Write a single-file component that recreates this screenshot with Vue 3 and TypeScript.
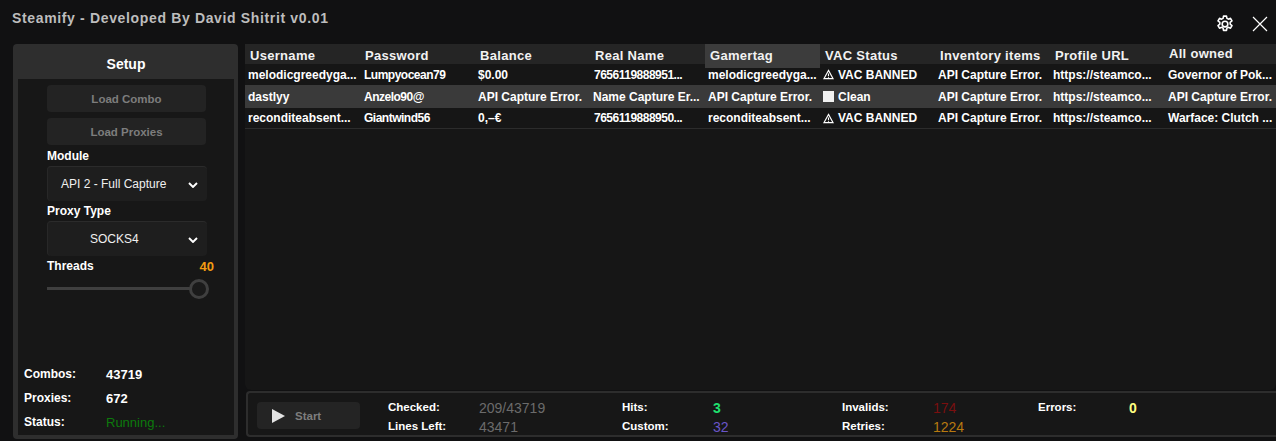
<script setup lang="ts">
interface Row { cells: string[]; vac: 'ban' | 'clean'; selected?: boolean }
const columns = ['Username', 'Password', 'Balance', 'Real Name', 'Gamertag', 'VAC Status', 'Inventory items', 'Profile URL', 'All owned']
const rows: Row[] = [
  { vac: 'ban', cells: ['melodicgreedyga...', 'Lumpyocean79', '$0.00', '7656119888951...', 'melodicgreedyga...', 'VAC BANNED', 'API Capture Error.', 'https://steamco...', 'Governor of Pok...'] },
  { vac: 'clean', selected: true, cells: ['dastlyy', 'Anzelo90@', 'API Capture Error.', 'Name Capture Er...', 'API Capture Error.', 'Clean', 'API Capture Error.', 'https://steamco...', 'API Capture Error.'] },
  { vac: 'ban', cells: ['reconditeabsent...', 'Giantwind56', '0,–€', '7656119888950...', 'reconditeabsent...', 'VAC BANNED', 'API Capture Error.', 'https://steamco...', 'Warface: Clutch ...'] },
]
const isTight = (cell: string, col: number) => col === 1 || /^\d{6}/.test(cell)
const statCols = [
  [{ l: 'Checked:', v: '209/43719', c: 'gray' }, { l: 'Lines Left:', v: '43471', c: 'gray' }],
  [{ l: 'Hits:', v: '3', c: 'green' }, { l: 'Custom:', v: '32', c: 'purple' }],
  [{ l: 'Invalids:', v: '174', c: 'red' }, { l: 'Retries:', v: '1224', c: 'amber' }],
  [{ l: 'Errors:', v: '0', c: 'yellow' }],
]
</script>

<template>
  <div class="win">
    <header class="top">
      <div class="title">Steamify - Developed By David Shitrit v0.01</div>
      <div class="win-icons">
        <svg class="gear" viewBox="0 0 24 24" width="20" height="20" fill="none" stroke="#fff" stroke-width="1.9" stroke-linejoin="round">
          <path d="M10.2 2.5h3.6l.5 2.8 1.7.9 2.6-1 1.8 3.1-2.2 1.8v2l2.2 1.8-1.8 3.1-2.6-1-1.7.9-.5 2.8h-3.6l-.5-2.8-1.7-.9-2.6 1-1.8-3.1 2.2-1.8v-2L3.6 8.3l1.8-3.1 2.6 1 1.7-.9z" />
          <circle cx="12" cy="12" r="3.4" />
        </svg>
        <svg class="close" viewBox="0 0 16 16" width="16" height="16" fill="none" stroke="#fff" stroke-width="1.2">
          <path d="M1 1l14 14M15 1L1 15" />
        </svg>
      </div>
    </header>
    <div class="main">
      <aside class="side">
        <div class="side-title">Setup</div>
        <div class="side-body">
          <div class="controls">
            <button class="load first">Load Combo</button>
            <button class="load">Load Proxies</button>
            <div class="lbl mod">Module</div>
            <div class="sel mod-sel"><span>API 2 - Full Capture</span>
              <svg viewBox="0 0 10 6" width="10" height="6" fill="none" stroke="#fff" stroke-width="1.9"><path d="M1 1l4 4 4-4" /></svg>
            </div>
            <div class="lbl pt">Proxy Type</div>
            <div class="sel socks"><span>SOCKS4</span>
              <svg viewBox="0 0 10 6" width="10" height="6" fill="none" stroke="#fff" stroke-width="1.9"><path d="M1 1l4 4 4-4" /></svg>
            </div>
            <div class="threads"><span class="lbl">Threads</span><span class="tval">40</span></div>
            <div class="slider"><div class="track"></div><div class="thumb"></div></div>
          </div>
          <div class="info">
            <div class="info-row"><span>Combos:</span><b>43719</b></div>
            <div class="info-row"><span>Proxies:</span><b>672</b></div>
            <div class="info-row"><span>Status:</span><b class="run">Running...</b></div>
          </div>
        </div>
      </aside>
      <section class="right">
        <div class="table">
          <div class="thead">
            <div v-for="(c, i) in columns" :key="c" class="th" :class="{ hot: i === 4, last: i === 8 }">{{ c }}</div>
          </div>
          <div v-for="(r, ri) in rows" :key="ri" class="tr" :class="{ selected: r.selected, b: ri === 2 }">
            <div v-for="(cell, ci) in r.cells" :key="ci" class="td" :class="{ tight: isTight(cell, ci) }">
              <template v-if="ci === 5">
                <svg v-if="r.vac === 'ban'" class="vi" viewBox="0 0 12 12" width="11" height="11" fill="none" stroke="#fff" stroke-width="1.2"><path d="M6 1.5L11 10.5H1z" /><path d="M6 5v3M6 8.7v.9" /></svg>
                <span v-else class="box"></span>
              </template>{{ cell }}
            </div>
          </div>
        </div>
        <div class="bar">
          <button class="start">
            <svg viewBox="0 0 14 16" width="14" height="16"><path d="M1 1l13 7-13 7z" fill="#e4e4e4" /></svg>
            <span>Start</span>
          </button>
          <div class="stats">
            <div v-for="(col, ci) in statCols" :key="ci" class="stat-col">
              <div v-for="s in col" :key="s.l" class="stat"><span class="sl">{{ s.l }}</span><span class="sv" :class="s.c">{{ s.v }}</span></div>
            </div>
          </div>
        </div>
      </section>
    </div>
  </div>
</template>

<style>
html, body { margin: 0; background: #111; }
</style>

<style scoped>
* { box-sizing: border-box; }
.win {
  width: 1276px; height: 441px; background: #111112; color: #fff; overflow: hidden;
  font-family: "Liberation Sans", sans-serif; font-size: 12px; font-weight: 700;
  display: flex; flex-direction: column;
}
.top { height: 44px; display: flex; justify-content: space-between; flex: none; }
.title { margin: 10px 0 0 12px; font-size: 14px; font-weight: 700; color: #bdbdbd; letter-spacing: .65px; line-height: 17px; }
.win-icons { display: flex; align-items: center; gap: 17px; padding: 3px 8px 0 0; }
.main { flex: 1; display: flex; align-items: flex-start; padding-left: 13px; }
.side { width: 225px; height: 395px; background: #2e2e2e; border-radius: 4px; padding: 0 4px 4px 5px; display: flex; flex-direction: column; flex: none; }
.side-title { height: 35px; text-align: center; line-height: 41px; font-size: 14px; font-weight: 700; }
.side-body { flex: 1; background: #171717; display: flex; flex-direction: column; justify-content: space-between; padding: 6px 0 1px 0; }
.controls { padding-left: 29px; width: 202px; margin-top: 0; }
.load { display: block; width: 159px; height: 27px; border: 0; border-radius: 4px; background: #232323; color: #7d7d7d; font: 700 11.5px "Liberation Sans", sans-serif; padding: 0; margin-bottom: 4px; }
.load.first { margin-bottom: 6px; }
.lbl { font-size: 12px; font-weight: 700; line-height: 14px; }
.mod { height: 17px; }
.sel { position: relative; width: 160px; height: 35px; border-radius: 4px; background: #1e1e1e; border-top: 1px solid #2b2b2b; border-left: 1px solid #282828; display: flex; align-items: center; font: 400 12px "Liberation Sans", sans-serif; color: #f0f0f0; }
.sel svg { position: absolute; right: 9px; top: 15px; }
.mod-sel span { margin-left: 13px; }
.socks span { margin-left: 42px; }
.pt { margin-top: 3px; height: 17px; }
.threads { display: flex; justify-content: space-between; align-items: flex-start; margin-top: 3px; height: 19px; width: 167px; }
.tval { color: #f39c12; font: 700 13px/15px "Liberation Sans", sans-serif; }
.slider { position: relative; height: 20px; width: 162px; }
.track { position: absolute; left: 0; right: 10px; top: 9px; height: 3px; background: #3f3f3f; }
.thumb { position: absolute; right: 0; top: 1px; width: 20px; height: 20px; border-radius: 50%; border: 3px solid #3f3f3f; background: #1a1a1a; }
.info { font: 700 12px "Liberation Sans", sans-serif; padding-left: 6px; }
.info-row { height: 24px; display: flex; align-items: center; }
.info-row span { width: 82px; }
.info-row b { font-weight: 700; font-size: 13px; }
.run { color: #0c7a0c; font-weight: 400 !important; }
.right { flex: 1; margin-left: 7px; display: flex; flex-direction: column; min-width: 0; }
.table { height: 346px; background: #161616; border-radius: 0 0 6px 6px; }
.thead, .tr { display: grid; grid-template-columns: 115px 115px 115px 115px 115px 115px 115px 115px 111px; }
.thead { height: 20px; background: #252525; }
.th { padding-left: 5px; line-height: 24px; font-size: 13px; letter-spacing: .3px; white-space: nowrap; color: #f2f2f2; font-weight: 700; }
.th.hot { background: #3c3c3c; }
.th.last { line-height: 20px; padding-left: 4px; }
.tr { height: 21px; align-items: center; }
.tr.selected { height: 23px; background: #3a3a3a; }
.tr.b { border-bottom: 1px solid #2c2c2c; }
.td { padding-left: 3px; white-space: nowrap; overflow: hidden; font-size: 12px; font-weight: 700; display: flex; align-items: center; }
.td.tight { letter-spacing: -.5px; padding-left: 4px; }
.vi { margin-right: 4px; flex: none; margin-left: 0; }
.box { width: 11px; height: 11px; background: #f2f2f2; margin: 0 4px 0 0; flex: none; }
.bar { margin-top: 1px; height: 46px; border: 2px solid #2d2d2d; border-right: 0; border-radius: 4px 0 0 4px; background: #171717; display: flex; margin-left: 1px; }
.start { margin: 9px 0 0 9px; width: 103px; height: 27px; border: 0; border-radius: 4px; background: #242424; color: #7d7d7d; display: flex; align-items: center; gap: 10px; padding: 1px 0 0 14px; font: 700 11.5px "Liberation Sans", sans-serif; }
.stats { display: flex; margin-left: 28px; padding-top: 4px; }
.stat-col { display: flex; flex-direction: column; }
.stat-col:nth-child(1) { width: 234px; }
.stat-col:nth-child(2) { width: 220px; }
.stat-col:nth-child(3) { width: 196px; }
.stat { display: flex; height: 19px; align-items: center; font: 700 11.5px "Liberation Sans", sans-serif; }
.sl { width: 91px; }
.sv { font-size: 14px; font-weight: 400; margin-top: 3px; }
.gray { color: #6b6b6b; }
.green { color: #1fe06f; font-weight: 700; }
.purple { color: #6a55c8; }
.red { color: #7a0f0f; }
.amber { color: #b87a10; }
.yellow { color: #ffff80; font-weight: 700; }
</style>
